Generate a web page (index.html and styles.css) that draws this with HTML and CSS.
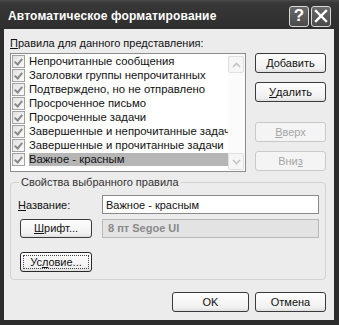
FILE: index.html
```html
<!DOCTYPE html>
<html>
<head>
<meta charset="utf-8">
<link rel="stylesheet" href="styles.css">
</head>
<body>
<div class="window">
  <div class="titlebar">
    <span class="title">Автоматическое форматирование</span>
    <div class="tbtns">
      <span class="tbtn help">?</span>
      <span class="tbtn close"><svg width="14" height="14" viewBox="0 0 14 14"><path d="M2 2 L12 12 M12 2 L2 12" stroke="#fff" stroke-width="2.4" stroke-linecap="square"/></svg></span>
    </div>
  </div>
  <div class="body">
    <div class="top">
      <div class="leftcol">
        <div class="label"><u>П</u>равила для данного представления:</div>
        <div class="list">
          <div class="items">
            <div class="row"><span class="cb"></span><span class="txt">Непрочитанные сообщения</span></div>
            <div class="row"><span class="cb"></span><span class="txt">Заголовки группы непрочитанных</span></div>
            <div class="row"><span class="cb"></span><span class="txt">Подтверждено, но не отправлено</span></div>
            <div class="row"><span class="cb"></span><span class="txt">Просроченное письмо</span></div>
            <div class="row"><span class="cb"></span><span class="txt">Просроченные задачи</span></div>
            <div class="row"><span class="cb"></span><span class="txt">Завершенные и непрочитанные задачи</span></div>
            <div class="row"><span class="cb"></span><span class="txt">Завершенные и прочитанные задачи</span></div>
            <div class="row sel"><span class="cb"></span><span class="txt">Важное - красным</span></div>
          </div>
          <div class="scrollbar">
            <div class="sbtn"><svg width="9" height="6" viewBox="0 0 9 6"><path d="M1 5 L4.5 1.5 L8 5" fill="none" stroke="#c4c4c4" stroke-width="1.6"/></svg></div>
            <div class="sbtn"><svg width="9" height="6" viewBox="0 0 9 6"><path d="M1 1 L4.5 4.5 L8 1" fill="none" stroke="#c4c4c4" stroke-width="1.6"/></svg></div>
          </div>
        </div>
      </div>
      <div class="rightcol">
        <div class="btn"><u>Д</u>обавить</div>
        <div class="btn"><u>У</u>далить</div>
        <div class="btn disabled gapbig"><u>В</u>верх</div>
        <div class="btn disabled">Вни<u>з</u></div>
      </div>
    </div>
    <div class="group">
      <div class="legend">Свойства выбранного правила</div>
      <div class="grow name">
        <span class="glabel"><u>Н</u>азвание:</span>
        <div class="field white">Важное - красным</div>
      </div>
      <div class="grow font">
        <div class="btn small"><u>Ш</u>рифт...</div>
        <div class="field gray">8 пт Segoe UI</div>
      </div>
      <div class="grow cond">
        <div class="btn small focus"><span class="focusbox">Ус<u>л</u>овие...</span></div>
      </div>
    </div>
    <div class="footer">
      <div class="btn ok">OK</div>
      <div class="btn">Отмена</div>
    </div>
  </div>
</div>
</body>
</html>
```
FILE: styles.css
```css
html, body { margin: 0; padding: 0; background: #2a2a2a; }
body { width: 339px; height: 325px; overflow: hidden; }
.window {
  width: 339px; height: 325px; box-sizing: border-box;
  background: #2c2c2c;
  padding: 0 5px 5px 4px;
  display: flex; flex-direction: column;
  font-family: "Liberation Sans", Arial, sans-serif;
  font-size: 11px; color: #111;
}
.titlebar {
  height: 29px; margin: 0 -5px 0 -4px; padding: 0 8px 0 8px;
  background: linear-gradient(#4a4a4a 0, #383838 3px, #333 50%, #2f2f2f 100%);
  display: flex; align-items: center; justify-content: space-between;
  flex-shrink: 0;
}
.title { color: #fff; font-weight: bold; font-size: 12px; letter-spacing: 0.15px; padding-top: 2px; }
.tbtns { display: flex; gap: 2px; padding-top: 3px; }
.tbtn {
  width: 18px; height: 19px; border: 1px solid #d8d8d8; border-radius: 3px;
  background: linear-gradient(#6a6a6a, #4a4a4a);
  color: #fff; font-weight: bold; font-size: 17px;
  display: flex; align-items: center; justify-content: center;
}
.body {
  flex: 1; background: #ececec;
  padding: 8px 8px 0 6px;
  display: flex; flex-direction: column;
}
.top { display: flex; gap: 9px; }
.leftcol { width: 236px; }
.label { height: 13px; line-height: 13px; margin-bottom: 3px; }
.list {
  height: 119px; box-sizing: border-box; border: 1px solid #8c8c8c; background: #fff;
  display: flex;
}
.items { flex: 1; overflow: hidden; padding-left: 1px; font-size: 11.3px; }
.row { height: 14px; display: flex; align-items: center; white-space: nowrap; }
.cb {
  width: 11px; height: 11px; flex-shrink: 0; border: 1px solid #a2a2a2;
  background: linear-gradient(135deg, #e2e2e2, #fbfbfb);
  position: relative; margin-right: 4px;
}
.cb::after {
  content: ""; position: absolute; left: 3px; top: 1px; width: 3px; height: 6px;
  border: solid #8a8a8a; border-width: 0 2px 2px 0; transform: rotate(40deg);
}
.txt { line-height: 13px; padding-right: 2px; }
.sel .txt { background: #b6b6b6; flex: 1; }
.scrollbar {
  width: 17px; flex-shrink: 0; background: #fbfbfb; padding: 2px 1px 1px 0;
  display: flex; flex-direction: column; justify-content: space-between; box-sizing: border-box;
}
.sbtn {
  height: 15px; border: 1px solid #e0e0e0; border-radius: 2px; background: #f6f6f6;
  display: flex; align-items: center; justify-content: center;
}
.rightcol { width: 71px; padding-top: 16px; display: flex; flex-direction: column; gap: 9px; }
.btn {
  height: 20px; box-sizing: border-box; border: 1px solid #3a3a3a; border-radius: 3px;
  background: linear-gradient(#fdfdfd, #f1f1f1 80%, #dedede);
  display: flex; align-items: center; justify-content: center;
  line-height: 13px;
}
.btn.disabled { border-color: #c9c9c9; color: #a6a6a6; background: #f4f4f4; }
.btn.gapbig { margin-top: 11px; }
.group {
  margin-top: 10px; border: 1px solid #d2d2d2; border-radius: 4px;
  padding: 0 6px 7px 7px;
}
.legend {
  width: fit-content; margin: -7px 0 0 1px; padding: 0 2px;
  background: #ececec; color: #333; line-height: 13px;
}
.grow { display: flex; align-items: center; }
.grow.name { margin-top: 6px; height: 19px; }
.grow.font { margin-top: 5px; height: 19px; }
.grow.cond { margin-top: 14px; }
.glabel { width: 84px; flex-shrink: 0; }
.field {
  flex: 1; height: 19px; box-sizing: border-box; display: flex; align-items: center;
  padding-left: 3px;
}
.field.white { background: #fff; border: 1px solid #8a8a8a; }
.field.gray { background: #e3e3e3; border: 1px solid #b8b8b8; color: #8a8a8a; font-weight: bold; padding-left: 5px; margin-top: -1px; }
.btn.small { width: 72px; height: 19px; margin-right: 10px; margin-left: 2px; flex-shrink: 0; }
.cond .btn.small { height: 20px; padding: 2px; border-color: #2a2a2a; }
.focusbox {
  flex: 1; align-self: stretch; border: 1px dotted #444;
  display: flex; align-items: center; justify-content: center;
}
.footer { display: flex; justify-content: flex-end; gap: 6px; margin-top: 12px; }
.footer .btn { width: 71px; }
.footer .btn.ok { width: 77px; }
```
